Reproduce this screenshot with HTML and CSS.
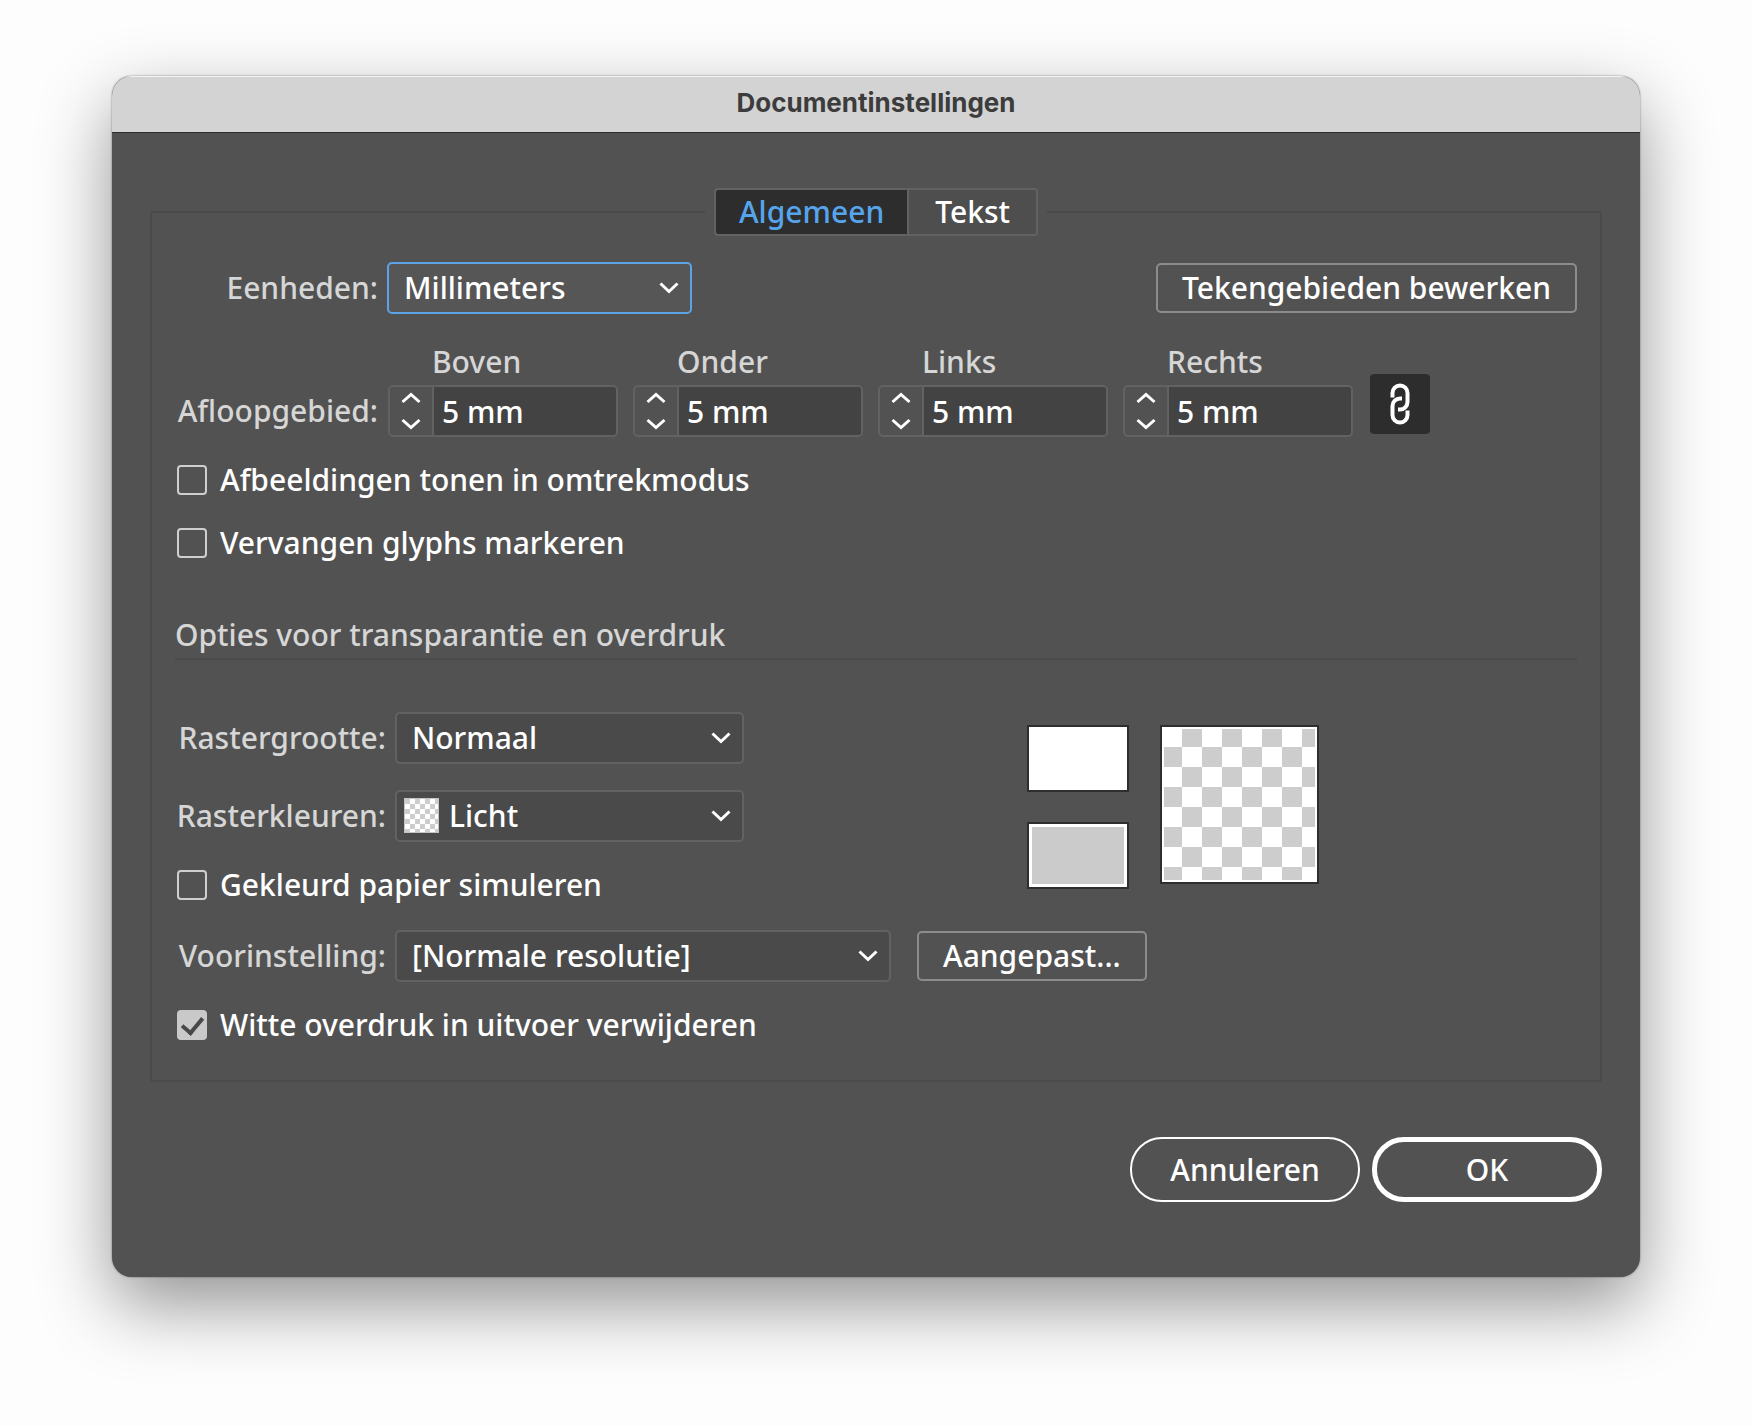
FILE: index.html
```html
<!DOCTYPE html>
<html lang="nl">

<head>
    <meta charset="UTF-8">
    <meta name="viewport" content="width=device-width, initial-scale=1.0">
    <title>Documentinstellingen</title>
    <link rel="stylesheet" href="styles.css">
</head>

<body>
    <main class="window">
        <header class="titlebar">
            <h1>Documentinstellingen</h1>
        </header>

        <form class="content">
            <fieldset class="panel">
                <legend class="tabs">
                    <button type="button" class="tab active">Algemeen</button>
                    <button type="button" class="tab">Tekst</button>
                </legend>

                <div class="row units">
                    <label class="label" for="units">Eenheden:</label>
                    <div class="select focused">
                        <select id="units">
                            <option>Millimeters</option>
                        </select>
                        <svg class="chevron" viewBox="0 0 20 12"><path d="M1.5 1.5L10 9.5L18.5 1.5" /></svg>
                    </div>
                    <button type="button" class="btn push">Tekengebieden bewerken</button>
                </div>

                <div class="row bleed">
                    <span class="label">Afloopgebied:</span>
                    <div class="field">
                        <label for="top">Boven</label>
                        <div class="stepper">
                            <svg viewBox="0 0 20 38"><path d="M1.5 10L10 2.5L18.5 10M1.5 28L10 35.5L18.5 28" /></svg>
                            <input type="text" id="top" value="5 mm">
                        </div>
                    </div>
                    <div class="field">
                        <label for="bottom">Onder</label>
                        <div class="stepper">
                            <svg viewBox="0 0 20 38"><path d="M1.5 10L10 2.5L18.5 10M1.5 28L10 35.5L18.5 28" /></svg>
                            <input type="text" id="bottom" value="5 mm">
                        </div>
                    </div>
                    <div class="field">
                        <label for="left">Links</label>
                        <div class="stepper">
                            <svg viewBox="0 0 20 38"><path d="M1.5 10L10 2.5L18.5 10M1.5 28L10 35.5L18.5 28" /></svg>
                            <input type="text" id="left" value="5 mm">
                        </div>
                    </div>
                    <div class="field">
                        <label for="right">Rechts</label>
                        <div class="stepper">
                            <svg viewBox="0 0 20 38"><path d="M1.5 10L10 2.5L18.5 10M1.5 28L10 35.5L18.5 28" /></svg>
                            <input type="text" id="right" value="5 mm">
                        </div>
                    </div>
                    <button type="button" class="link-btn" aria-label="Koppelen">
                        <svg viewBox="0 0 20 42">
                            <path d="M2.5 14.5V10A7.5 7.5 0 0 1 17.5 10V19A7.5 7.5 0 0 1 10 26.5H8" />
                            <path d="M17.5 27.5V32A7.5 7.5 0 0 1 2.5 32V23A7.5 7.5 0 0 1 10 15.5H12" />
                        </svg>
                    </button>
                </div>

                <label class="check"><input type="checkbox">Afbeeldingen tonen in omtrekmodus</label>
                <label class="check"><input type="checkbox">Vervangen glyphs markeren</label>

                <h2>Opties voor transparantie en overdruk</h2>

                <div class="grid-options">
                    <div>
                        <div class="row wide">
                            <label class="label" for="size">Rastergrootte:</label>
                            <div class="select medium">
                                <select id="size">
                                    <option>Normaal</option>
                                </select>
                                <svg class="chevron" viewBox="0 0 20 12"><path d="M1.5 1.5L10 9.5L18.5 1.5" /></svg>
                            </div>
                        </div>
                        <div class="row wide">
                            <label class="label" for="colors">Rasterkleuren:</label>
                            <div class="select medium with-swatch">
                                <select id="colors">
                                    <option>Licht</option>
                                </select>
                                <span class="mini-grid"></span>
                                <svg class="chevron" viewBox="0 0 20 12"><path d="M1.5 1.5L10 9.5L18.5 1.5" /></svg>
                            </div>
                        </div>
                        <label class="check"><input type="checkbox">Gekleurd papier simuleren</label>
                    </div>
                    <div class="preview">
                        <div class="swatches">
                            <button type="button" class="swatch" aria-label="Rasterkleur 1"></button>
                            <button type="button" class="swatch gray" aria-label="Rasterkleur 2"></button>
                        </div>
                        <div class="checker"></div>
                    </div>
                </div>

                <div class="row wide">
                    <label class="label" for="preset">Voorinstelling:</label>
                    <div class="select large">
                        <select id="preset">
                            <option>[Normale resolutie]</option>
                        </select>
                        <svg class="chevron" viewBox="0 0 20 12"><path d="M1.5 1.5L10 9.5L18.5 1.5" /></svg>
                    </div>
                    <button type="button" class="btn custom">Aangepast...</button>
                </div>
                <label class="check"><input type="checkbox" checked>Witte overdruk in uitvoer verwijderen</label>
            </fieldset>

            <div class="actions">
                <button type="button" class="pill">Annuleren</button>
                <button type="submit" class="pill primary">OK</button>
            </div>
        </form>
    </main>
</body>

</html>
```
FILE: styles.css
```css
* {
    box-sizing: border-box;
}

body {
    margin: 0;
    min-height: 100vh;
    padding: 76px 112px;
    background: #fdfdfd;
    font-family: "Noto Sans", "Open Sans", sans-serif;
    font-size: 30px;
    font-weight: 500;
    line-height: 40px;
    color: #fff;
}

button, input, select {
    font: inherit;
    color: inherit;
    margin: 0;
    padding: 0;
}

svg {
    fill: none;
    stroke: #fff;
    stroke-width: 3;
    display: block;
}

.window {
    background: #525252;
    border-radius: 20px;
    box-shadow: 0 0 2px rgba(0, 0, 0, 0.5), 0 28px 72px rgba(0, 0, 0, 0.42);
    overflow: hidden;
}

.titlebar {
    height: 57px;
    background: #d3d3d3;
    border-top: 1px solid #f4f4f4;
    border-bottom: 1px solid #2c2c2c;
}

.titlebar h1 {
    margin: 0;
    font-family: Inter, sans-serif;
    font-size: 26px;
    font-weight: 700;
    line-height: 52px;
    text-align: center;
    color: #3c3c3c;
}

.content {
    padding: 55px 38px 75px;
}

.panel {
    margin: 0;
    padding: 26px 23px 35px;
    border: 2px solid #4a4a4a;
    border-radius: 3px;
    min-width: 0;
}

.tabs {
    display: flex;
    margin: 0 auto;
    padding: 0 9px;
}

.tab {
    height: 48px;
    padding: 0 26px;
    border: 2px solid #626262;
    background: #4e4e4e;
    border-radius: 0 4px 4px 0;
}

.tab.active {
    padding: 0 23px;
    background: #2d2d2d;
    color: #56a5ec;
    border-radius: 4px 0 0 4px;
    border-right: none;
}

.row {
    display: flex;
    align-items: center;
    gap: 9px;
}

.label {
    width: 203px;
    text-align: right;
    white-space: nowrap;
    color: #d6d6d6;
}

.wide .label {
    width: 211px;
}

/* dropdowns */
.select {
    position: relative;
    width: 305px;
    height: 52px;
}

.select.medium {
    width: 349px;
}

.select.large {
    width: 496px;
}

.select select {
    appearance: none;
    width: 100%;
    height: 100%;
    padding: 0 50px 0 15px;
    background: #4a4a4a;
    border: 2px solid #626262;
    border-radius: 5px;
    outline: none;
}

.select.focused select {
    background: #565656;
    border-color: #5ba3e4;
}

.select.with-swatch select {
    padding-left: 52px;
}

.chevron {
    position: absolute;
    right: 13px;
    top: 20px;
    width: 20px;
    height: 12px;
    pointer-events: none;
}

.mini-grid {
    position: absolute;
    left: 9px;
    top: 8px;
    width: 35px;
    height: 35px;
    border: 1px solid #c4c4c4;
    background: conic-gradient(#fff 25%, #cdcdcd 0 50%, #fff 0 75%, #cdcdcd 0) 0 0 / 10px 10px;
    pointer-events: none;
}

.btn {
    height: 50px;
    padding: 0 24px;
    background: none;
    border: 2px solid #8c8c8c;
    border-radius: 5px;
}

.push {
    margin-left: auto;
}

.custom {
    margin-left: 17px;
}

/* bleed fields */
.bleed {
    align-items: flex-end;
    gap: 15px;
    margin-top: 28px;
}

.bleed .label {
    line-height: 52px;
    margin-right: -5px;
}

.field label {
    display: block;
    margin-bottom: 3px;
    padding-left: 44px;
    color: #d6d6d6;
}

.stepper {
    display: flex;
    align-items: center;
    width: 230px;
    height: 52px;
    border: 2px solid #626262;
    border-radius: 5px;
}

.stepper svg {
    width: 20px;
    height: 38px;
    margin: 0 11px;
}

.stepper input {
    flex: 1;
    min-width: 0;
    height: 100%;
    padding-left: 8px;
    background: #434343;
    border: none;
    border-left: 2px solid #626262;
    border-radius: 0 3px 3px 0;
    outline: none;
}

.link-btn {
    display: grid;
    place-items: center;
    width: 60px;
    height: 60px;
    margin: 0 0 3px 2px;
    background: #2d2d2d;
    border: none;
    border-radius: 4px;
}

.link-btn svg {
    width: 20px;
    height: 42px;
    stroke-width: 4;
}

/* checkboxes */
.check {
    display: flex;
    align-items: center;
    gap: 13px;
    margin: 23px 0 0 2px;
}

.check input {
    appearance: none;
    display: grid;
    place-items: center;
    width: 30px;
    height: 30px;
    border: 2px solid #cfcfcf;
    border-radius: 4px;
}

.check input:checked {
    background: #c9c9c9;
    border-color: #c9c9c9;
}

.check input:checked::after {
    content: "";
    width: 9px;
    height: 17px;
    border: solid #484848;
    border-width: 0 4px 4px 0;
    transform: translateY(-2px) rotate(40deg);
}

h2 {
    margin: 52px 0;
    padding-bottom: 3px;
    border-bottom: 2px solid #4a4a4a;
    font-size: inherit;
    font-weight: inherit;
    color: #d6d6d6;
}

/* transparency grid */
.grid-options {
    display: grid;
    grid-template-columns: 1fr 550px;
    margin-bottom: 25px;
}

.grid-options .row + .row {
    margin-top: 26px;
}

.preview {
    display: flex;
    align-items: flex-start;
    gap: 31px;
    padding-top: 13px;
}

.swatches {
    display: grid;
    gap: 30px;
}

.swatch {
    width: 102px;
    height: 67px;
    background: #fff;
    border: 2px solid #2e2e2e;
}

.swatch.gray {
    background: #cbcbcb;
    box-shadow: inset 0 0 0 3px #fff;
}

.checker {
    width: 159px;
    height: 159px;
    border: 2px solid #2e2e2e;
    background: conic-gradient(#cdcdcd 25%, #fff 0 50%, #cdcdcd 0 75%, #fff 0) 0 0 / 40px 40px;
    box-shadow: inset 0 0 0 2px #fff;
}

.actions {
    display: flex;
    justify-content: flex-end;
    gap: 12px;
    margin-top: 55px;
}

.pill {
    width: 230px;
    height: 65px;
    background: none;
    border: 2px solid #fff;
    border-radius: 32px;
}

.pill.primary {
    border-width: 5px;
}
```
